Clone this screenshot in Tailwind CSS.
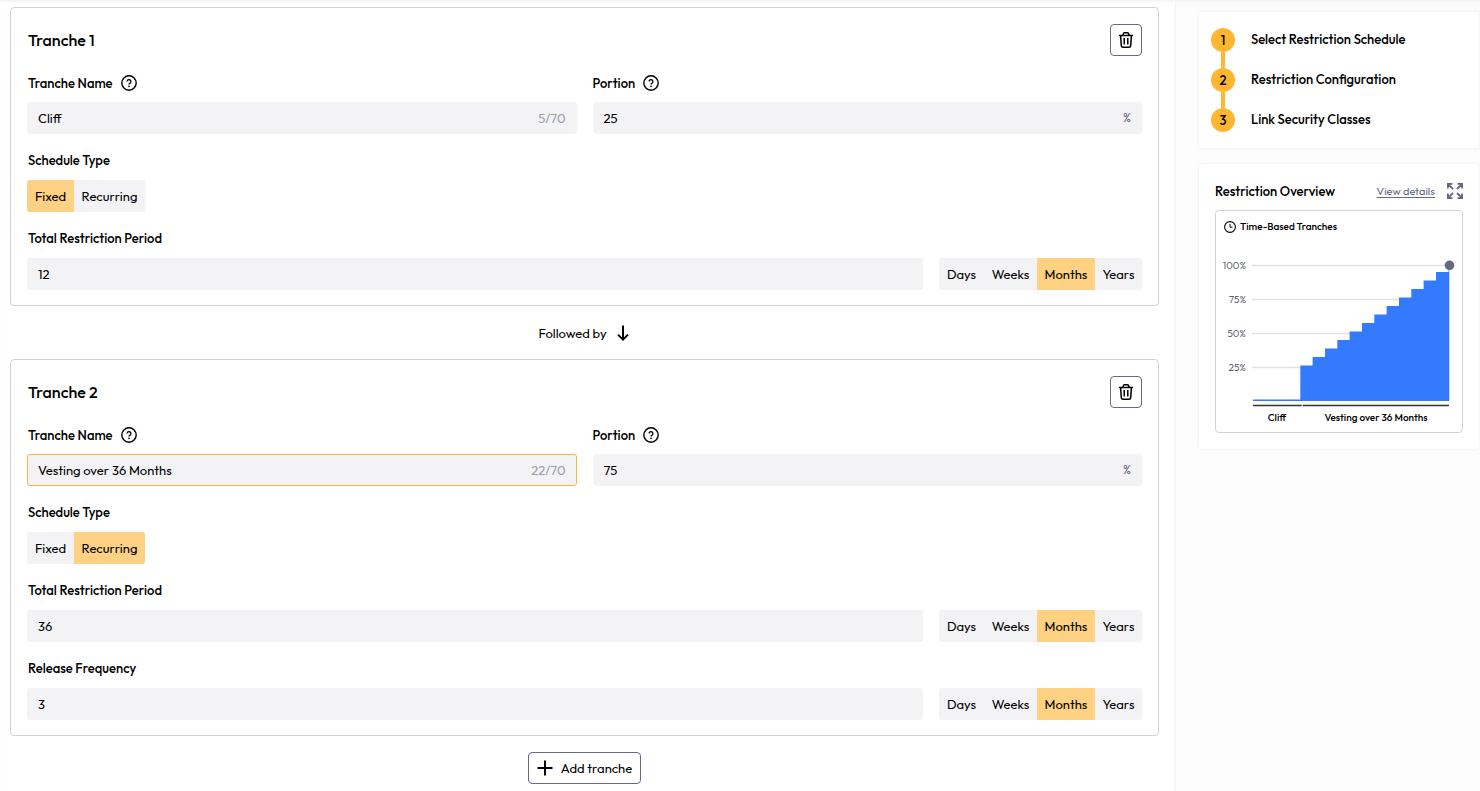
<!DOCTYPE html>
<html lang="en">
<head>
  <meta charset="UTF-8">
  <meta name="viewport" content="width=device-width, initial-scale=1.0">
  <title>Restriction Configuration</title>
  <script src="https://cdn.jsdelivr.net/npm/@tailwindcss/browser@4"></script>
</head>
<body class="bg-white text-black text-[13px] leading-5 font-['Outfit','Lato',sans-serif] overflow-x-hidden">
  <!-- Shared icons -->
  <svg class="hidden">
    <symbol id="icon-help" viewBox="0 0 16 16">
      <circle cx="8" cy="8" r="7.2" fill="none" stroke="currentColor" stroke-width="1.4"/>
      <path d="M6.1 6.5a1.9 1.9 0 1 1 2.9 1.6c-.7.4-1 .7-1 1.3" fill="none" stroke="currentColor" stroke-width="1.3"/>
      <circle cx="8" cy="11.3" r=".85" fill="currentColor"/>
    </symbol>
    <symbol id="icon-trash" viewBox="0 0 16 16">
      <path d="M1 3.4h14M4.8 3.2 5.6 1.4Q5.9.8 6.5.8h3q.6 0 .9.6l.8 1.8M2.6 3.6l.7 10q.1 1.600 1.700 1.600h6q1.600 0 1.700-1.600l.7-10M6.200 6v6.400M9.800 6v6.400" fill="none" stroke="currentColor" stroke-width="1.5"/>
    </symbol>
  </svg>

  <div class="flex min-h-screen shadow-[inset_0_2px_2px_#f5f5f5]">
    <main class="flex-1 min-w-0 pt-[7px] pl-[10px] pr-4 border-r border-[#f3f3f5]">
      <!-- Tranche 1 -->
      <section class="border border-[#d0d1da] rounded px-4 pt-4 pb-[15px]">
        <div class="flex items-center justify-between">
          <h2 class="pl-px text-base font-medium">Tranche 1</h2>
          <button type="button" aria-label="Delete tranche 1" class="size-8 flex items-center justify-center border border-[#656a80] rounded">
            <svg class="size-4"><use href="#icon-trash"/></svg>
          </button>
        </div>
        <div class="mt-4 grid grid-cols-2 gap-4">
          <div>
            <div class="h-[22px] mb-2 pl-px flex items-center gap-2">
              <label for="name-1" class="font-medium">Tranche Name</label>
              <svg class="size-4"><use href="#icon-help"/></svg>
            </div>
            <div class="h-8 flex items-center bg-[#f3f3f6] rounded-[3px] border border-[#f3f3f6] px-[10px]">
              <input id="name-1" type="text" value="Cliff" class="flex-1 min-w-0 outline-none">
              <span class="text-[#9b9eac]">5/70</span>
            </div>
          </div>
          <div>
            <div class="h-[22px] mb-2 flex items-center gap-2">
              <label for="portion-1" class="font-medium">Portion</label>
              <svg class="size-4"><use href="#icon-help"/></svg>
            </div>
            <div class="h-8 flex items-center bg-[#f3f3f6] rounded-[3px] border border-[#f3f3f6] px-[10px]">
              <input id="portion-1" type="text" value="25" class="flex-1 min-w-0 outline-none">
              <span class="text-xs text-[#656a80]">%</span>
            </div>
          </div>
        </div>
        <div class="mt-4">
          <h3 class="mb-[10px] pl-px font-medium">Schedule Type</h3>
          <div class="inline-flex h-8 bg-[#f3f3f6] rounded-[3px] overflow-hidden align-top">
            <button type="button" class="w-[47px] bg-[#ffd283]">Fixed</button>
            <button type="button" class="w-[71px]">Recurring</button>
          </div>
        </div>
        <div class="mt-4">
          <label for="period-1" class="block mb-[10px] pl-px font-medium">Total Restriction Period</label>
          <div class="flex gap-4">
            <input id="period-1" type="text" value="12" class="flex-1 min-w-0 h-8 px-[11px] bg-[#f3f3f6] rounded-[3px] outline-none">
            <div class="flex h-8 bg-[#f3f3f6] rounded-[3px] overflow-hidden">
              <button type="button" class="w-[45px]">Days</button>
              <button type="button" class="w-[53px]">Weeks</button>
              <button type="button" class="w-[58px] bg-[#ffd283]">Months</button>
              <button type="button" class="w-[47px]">Years</button>
            </div>
          </div>
        </div>
      </section>

      <div class="h-[53px] flex items-center justify-center gap-2">
        <span>Followed by</span>
        <svg class="size-4" viewBox="0 0 16 16" fill="none" stroke="currentColor" stroke-width="2"><path d="M8 .5v14M3 9.6l5 5 5-5"/></svg>
      </div>

      <!-- Tranche 2 -->
      <section class="border border-[#d0d1da] rounded px-4 pt-4 pb-[15px]">
        <div class="flex items-center justify-between">
          <h2 class="pl-px text-base font-medium">Tranche 2</h2>
          <button type="button" aria-label="Delete tranche 2" class="size-8 flex items-center justify-center border border-[#656a80] rounded">
            <svg class="size-4"><use href="#icon-trash"/></svg>
          </button>
        </div>
        <div class="mt-4 grid grid-cols-2 gap-4">
          <div>
            <div class="h-[22px] mb-2 pl-px flex items-center gap-2">
              <label for="name-2" class="font-medium">Tranche Name</label>
              <svg class="size-4"><use href="#icon-help"/></svg>
            </div>
            <div class="h-8 flex items-center bg-[#f3f3f6] rounded-[3px] border border-[#ffb732] px-[10px]">
              <input id="name-2" type="text" value="Vesting over 36 Months" class="flex-1 min-w-0 outline-none">
              <span class="text-[#9b9eac]">22/70</span>
            </div>
          </div>
          <div>
            <div class="h-[22px] mb-2 flex items-center gap-2">
              <label for="portion-2" class="font-medium">Portion</label>
              <svg class="size-4"><use href="#icon-help"/></svg>
            </div>
            <div class="h-8 flex items-center bg-[#f3f3f6] rounded-[3px] border border-[#f3f3f6] px-[10px]">
              <input id="portion-2" type="text" value="75" class="flex-1 min-w-0 outline-none">
              <span class="text-xs text-[#656a80]">%</span>
            </div>
          </div>
        </div>
        <div class="mt-4">
          <h3 class="mb-[10px] pl-px font-medium">Schedule Type</h3>
          <div class="inline-flex h-8 bg-[#f3f3f6] rounded-[3px] overflow-hidden align-top">
            <button type="button" class="w-[47px]">Fixed</button>
            <button type="button" class="w-[71px] bg-[#ffd283]">Recurring</button>
          </div>
        </div>
        <div class="mt-4">
          <label for="period-2" class="block mb-[10px] pl-px font-medium">Total Restriction Period</label>
          <div class="flex gap-4">
            <input id="period-2" type="text" value="36" class="flex-1 min-w-0 h-8 px-[11px] bg-[#f3f3f6] rounded-[3px] outline-none">
            <div class="flex h-8 bg-[#f3f3f6] rounded-[3px] overflow-hidden">
              <button type="button" class="w-[45px]">Days</button>
              <button type="button" class="w-[53px]">Weeks</button>
              <button type="button" class="w-[58px] bg-[#ffd283]">Months</button>
              <button type="button" class="w-[47px]">Years</button>
            </div>
          </div>
        </div>
        <div class="mt-4">
          <label for="frequency-2" class="block mb-[10px] pl-px font-medium">Release Frequency</label>
          <div class="flex gap-4">
            <input id="frequency-2" type="text" value="3" class="flex-1 min-w-0 h-8 px-[11px] bg-[#f3f3f6] rounded-[3px] outline-none">
            <div class="flex h-8 bg-[#f3f3f6] rounded-[3px] overflow-hidden">
              <button type="button" class="w-[45px]">Days</button>
              <button type="button" class="w-[53px]">Weeks</button>
              <button type="button" class="w-[58px] bg-[#ffd283]">Months</button>
              <button type="button" class="w-[47px]">Years</button>
            </div>
          </div>
        </div>
      </section>

      <div class="mt-4 flex justify-center">
        <button type="button" class="h-8 px-2 flex items-center gap-2 border border-[#656a80] rounded">
          <svg class="size-4" viewBox="0 0 16 16" stroke="currentColor" stroke-width="2"><path d="M8 .5v15M.5 8h15"/></svg>
          Add tranche
        </button>
      </div>
    </main>

    <aside class="w-[304px] shrink-0 bg-[#fcfcfc] pt-3 pl-[23px] pr-px shadow-[inset_0_2px_2px_#f5f5f5]">
      <!-- Steps -->
      <ol class="h-[136px] bg-white pt-4 pl-3 font-medium shadow-[0_0_3px_#ececef]">
        <li class="flex gap-4">
          <div class="flex flex-col items-center">
            <span class="size-6 rounded-full bg-[#ffb732] flex items-center justify-center">1</span>
            <span class="w-1 h-4 bg-[#ffb732]"></span>
          </div>
          <span class="leading-[22px]">Select Restriction Schedule</span>
        </li>
        <li class="flex gap-4">
          <div class="flex flex-col items-center">
            <span class="size-6 rounded-full bg-[#ffb732] flex items-center justify-center">2</span>
            <span class="w-1 h-4 bg-[#ffb732]"></span>
          </div>
          <span class="leading-[22px]">Restriction Configuration</span>
        </li>
        <li class="flex gap-4">
          <span class="size-6 rounded-full bg-[#ffb732] flex items-center justify-center">3</span>
          <span class="leading-[22px]">Link Security Classes</span>
        </li>
      </ol>

      <!-- Overview -->
      <section class="mt-4 bg-white rounded p-4 shadow-[0_0_3px_#ececef]">
        <div class="h-[22px] mb-2 flex items-center">
          <h2 class="font-medium">Restriction Overview</h2>
          <a href="#" class="ml-auto text-[11px] text-[#656a80] underline underline-offset-2">View details</a>
          <button type="button" aria-label="Expand chart" class="ml-3 text-[#656a80]">
            <svg class="size-4" viewBox="0 0 16 16" fill="none" stroke="currentColor" stroke-width="1.8"><path d="M.9 5.5V.9H5.5M1 1l5 5M10.5.9h4.6V5.5M15 1l-5 5M.9 10.5v4.6H5.5M1 15l5-5M10.5 15.1h4.6V10.5M15 15l-5-5"/></svg>
          </button>
        </div>
        <div class="border border-[#d0d1da] rounded">
          <div class="h-8 px-2 flex items-center gap-1">
            <svg class="size-3" viewBox="0 0 12 12" fill="none" stroke="currentColor"><circle cx="6" cy="6" r="5.4" stroke-width="1.1"/><path d="M6 2.8V6.2h2.5"/></svg>
            <h3 class="text-[10px] font-medium">Time-Based Tranches</h3>
          </div>
          <svg class="block w-full" viewBox="0 0 246 189">
            <path d="M36 22.5h197M36 56.5h197M36 90.5h197M36 124.5h197" stroke="#e2e2e4" stroke-width="1.3"/>
            <path d="M37 158V156.5H84.3V122.5H96.6V114H109V105.5H121.3V97H133.6V88.5H146V80H158.3V71.5H170.6V63H183V54.5H195.3V46H207.6V37.5H220V29H232.6V22H233.3V158Z" fill="#337aff"/>
            <circle cx="233.5" cy="22.3" r="4.8" fill="#656a80"/>
            <path d="M37 162.5h48.7M86.7 162.5h146.3" stroke="#333" stroke-width="1.3"/>
            <g class="text-[10px] font-light" fill="#44454c" text-anchor="end">
              <text x="30" y="26">100%</text>
              <text x="30" y="60">75%</text>
              <text x="30" y="94">50%</text>
              <text x="30" y="128">25%</text>
            </g>
            <g class="text-[10px] font-medium" text-anchor="middle">
              <text x="61" y="178">Cliff</text>
              <text x="160" y="178">Vesting over 36 Months</text>
            </g>
          </svg>
        </div>
      </section>
    </aside>
  </div>
</body>
</html>
